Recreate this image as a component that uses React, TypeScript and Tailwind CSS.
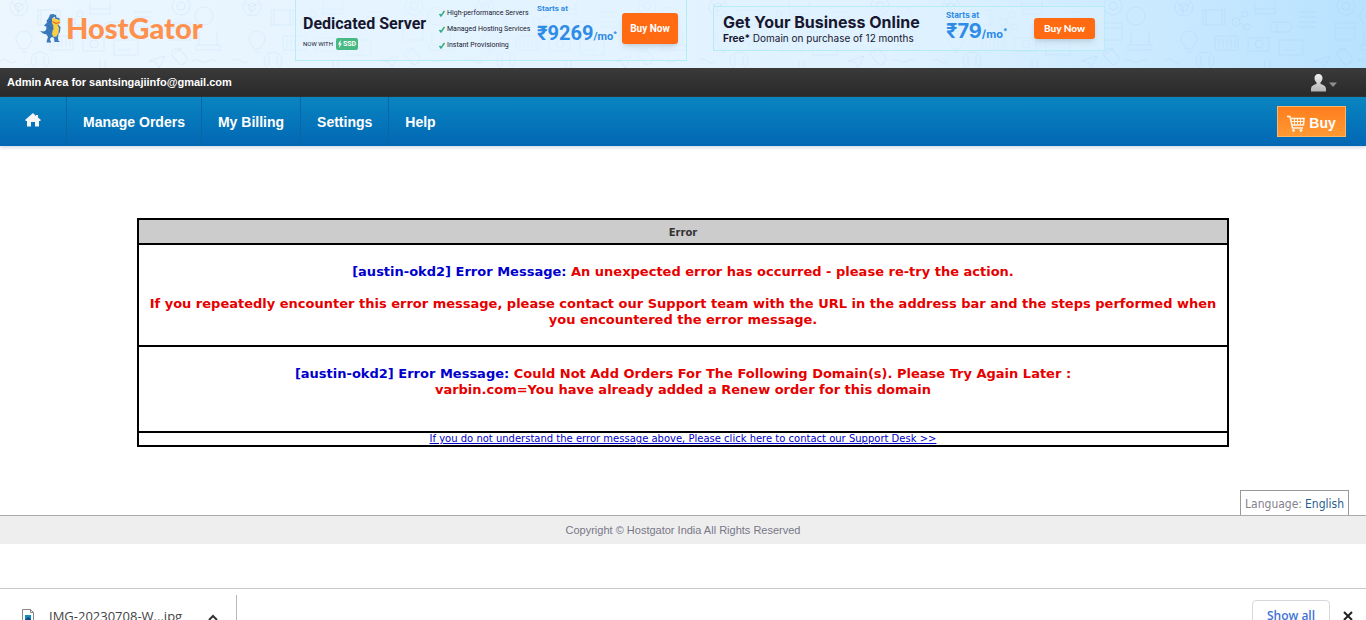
import React from "react";

const tips: string[] = ["High-performance Servers", "Managed Hosting Services", "Instant Provisioning"];

function Doodles() {
  return (
    <svg className="absolute inset-0 h-full w-full" aria-hidden="true">
      <defs>
        <pattern id="doodles" width="233" height="136" patternUnits="userSpaceOnUse">
          <g fill="none" stroke="#6fa6d0" strokeOpacity="0.11" strokeWidth="1">
            <circle cx="19" cy="7" r="9" />
            <circle cx="19" cy="7" r="4" />
            <path d="M12 3l6 4 8-4M18 7v8" />
            <rect x="38" y="10" width="22" height="15" />
            <path d="M41 10v15M57 10v15" />
            <circle cx="71" cy="22" r="4" />
            <circle cx="80" cy="14" r="3" />
            <circle cx="82" cy="27" r="3" />
            <path d="M74 20l4-4M75 23l4 3" />
            <path d="M21 49c-1-4-5-5-5-10a8 8 0 0 1 16 0c0 5-4 6-5 10zM22 52h5" />
            <rect x="50" y="36" width="23" height="14" rx="1" />
            <path d="M54 39v8M58 39v8M62 39v8M66 39v8M70 39v8" />
            <circle cx="40" cy="61" r="9" />
            <path d="M36 56v10M44 56v10M0 61q4-4 8 0t8 0" />
            <path d="M90 2v12h20V2M90 9h20" />
            <rect x="105" y="22" width="22" height="10" rx="5" />
            <path d="M112 22v10M134 12h17M134 17h17M134 22h17M134 27h17" />
            <rect x="83" y="38" width="21" height="13" />
            <circle cx="94" cy="44" r="4" />
            <rect x="114" y="40" width="24" height="15" />
            <path d="M118 50h12M100 60v8M105 60v8M149 61l16-5-6 12-3-6z" />
            <circle cx="181" cy="6" r="9" />
            <circle cx="181" cy="6" r="4" />
            <circle cx="204" cy="16" r="9" />
            <rect x="170" y="23" width="20" height="17" />
            <path d="M170 28h20" />
            <path d="M199 32v13M217 32v13M196 45h24v5h-24z" />
            <rect x="174" y="48" width="10" height="17" rx="4" transform="rotate(-42 179 56)" />
            <path d="M174 53l8-5M192 61q4-3 8 0t8 0t8 0" />
          </g>
        </pattern>
      </defs>
      <rect width="100%" height="100%" fill="url(#doodles)" />
    </svg>
  );
}

function Gator() {
  return (
    <svg className="h-[30px] w-[22px] shrink-0" viewBox="0 0 22 30" aria-hidden="true">
      <path
        fill="#3b79bd"
        d="M9 4.500 10 1.500 13 1l3 1 .5 2.500L19 5l1 1.500-2 1L18.500 12l2 2-.5 5-1.500 2-.5 4 .5 3h1v1h-5l-.5-4-2-1-1.500 1-.5 2 1 1.500V29.500H6.500L7 27l1-3-1.500-2.500L3 20.500 0 18l4 .5 2-1.500.5-3L4 12.500l3-3-.5-2L8 6z"
      />
      <path fill="#f8cf45" d="m12 5 5 1 3 1.500v3L17.500 12 19 15l-.5 5-2 3.500-3 .5-1.500-3 1-5 .5-3-1.500-3z" />
      <path fill="none" stroke="#ee6a2c" strokeWidth="1.200" d="m12.500 8.500 3.500 2 4-1.500" />
      <path fill="none" stroke="#2f68aa" strokeWidth="0.700" d="m8 12 2 3 4 1M8.500 5l3 2.500L9 10M6 18l3 2" />
      <path fill="#fff" d="M13.500 4h1.500v1.500h-1.500z" />
    </svg>
  );
}

export default function App() {
  return (
    <div className="flex h-screen flex-col overflow-hidden bg-white font-['Liberation_Sans',sans-serif]">
      <header className="relative h-[68px] shrink-0 bg-linear-to-r from-[#ebf6ff] via-[#e0f2ff] via-65% to-[#b8e2ff]">
        <Doodles />
        <div className="relative flex h-full items-start">
          <a href="#" aria-label="HostGator" className="flex w-[255px] shrink-0 items-center pt-[13px] pl-10 text-[#ff914f]">
            <Gator />
            <span className="pl-1 font-['Lato',sans-serif] text-[29px] leading-[30px] font-black">HostGator</span>
          </a>
          <section className="ml-10 flex h-[61px] w-[392px] shrink-0 border border-t-0 border-[#b5edf5] bg-[#e3f4ff]/50 font-['Roboto',sans-serif] text-[#17172f]">
            <div className="w-[143px] pt-[12px] pl-[7px]">
              <h2 className="text-[16px] leading-6 font-bold whitespace-nowrap">Dedicated Server</h2>
              <p className="flex items-center gap-[3px] text-[6px] leading-4 whitespace-nowrap">
                NOW WITH
                <span className="flex h-3 items-center gap-px rounded-xs bg-[#48b982] px-[2px] text-[7px] font-bold text-white">
                  <svg className="h-2 w-1" viewBox="0 0 4 8" fill="#fff" aria-hidden="true"><path d="M2.500 0 0 4.500h1.500L1 8l3-4.500H2.500z" /></svg>
                  SSD
                </span>
              </p>
            </div>
            <ul className="w-[98px] pt-[5px] text-[7px] leading-4 whitespace-nowrap">
              {tips.map((tip) => (
                <li key={tip} className="flex items-center gap-[2px]">
                  <svg className="h-[7px] w-[6px] shrink-0" viewBox="0 0 6 7" fill="none" stroke="#29ad86" strokeWidth="1.500" aria-hidden="true">
                    <path d="m0.500 4 1.500 2 3.500-5" />
                  </svg>
                  {tip}
                </li>
              ))}
            </ul>
            <div className="w-[85px] pt-[3px] font-bold text-[#2e8be6]">
              <p className="text-[8px] leading-3">Starts at</p>
              <p className="flex items-baseline text-[20px] leading-9 whitespace-nowrap">
                ₹9269<span className="text-[11px]">/mo</span><sup className="text-[8px]">*</sup>
              </p>
            </div>
            <button className="mt-[13px] h-[31px] w-14 rounded-[3px] bg-[#ff6a13] text-[10px] font-bold whitespace-nowrap text-white shadow-md">Buy Now</button>
          </section>
          <section className="mt-[6px] ml-[26px] flex h-[45px] w-[392px] shrink-0 border border-[#b5edf5] bg-[#e0f2ff]/50 font-['Inter',sans-serif] text-[#17172f]">
            <div className="w-[232px] pt-[6px] pl-[9px] whitespace-nowrap">
              <h2 className="text-[16px] leading-[18px] font-bold">Get Your Business Online</h2>
              <p className="text-[10px] leading-[14px]"><b>Free*</b> Domain on purchase of 12 months</p>
            </div>
            <div className="w-[88px] pt-[3px] font-bold text-[#2e8be6]">
              <p className="text-[8px] leading-[10px]">Starts at</p>
              <p className="text-[20px] leading-[22px] whitespace-nowrap">
                ₹79<span className="text-[11px]">/mo</span><sup className="text-[8px]">*</sup>
              </p>
            </div>
            <button className="mt-[11px] h-[21px] w-[61px] rounded-[3px] bg-[#ff6a13] font-['Lato',sans-serif] text-[10px] font-black text-white shadow-md">Buy Now</button>
          </section>
        </div>
      </header>

      <div className="flex h-[29px] shrink-0 items-center justify-between bg-linear-to-b from-[#3a3a3a] to-[#292929] pr-[29px] pl-[7px]">
        <p className="text-[11px] font-bold text-white">Admin Area for santsingajiinfo@gmail.com</p>
        <button aria-label="Account menu">
          <svg className="h-[18px] w-[26px]" viewBox="0 0 26 18">
            <defs>
              <linearGradient id="person" x1="0" y1="0" x2="0" y2="1">
                <stop offset="0" stopColor="#f2f2f2" />
                <stop offset="1" stopColor="#b4b4b4" />
              </linearGradient>
            </defs>
            <path fill="url(#person)" d="M7.500 0c2.500 0 4 1.700 4 4 0 2-.8 3.400-2 4.400V10c3 .7 5.500 2.200 5.500 5v2.500H0V15c0-2.800 2.500-4.300 5.500-5V8.400C4.300 7.400 3.500 6 3.500 4c0-2.300 1.500-4 4-4z" />
            <path fill="#8f8f8f" d="M18 8.500h8L22 13z" />
          </svg>
        </button>
      </div>

      <nav className="z-10 flex h-[49px] shrink-0 items-stretch bg-linear-to-b from-[#0a85c0] to-[#0467b4] pr-5 text-[14px] font-bold text-white shadow-[0_2px_3px_#d8dde8]">
        <a href="#" aria-label="Home" className="flex w-[67px] justify-center border-r border-[#0767a5] pt-4">
          <svg className="h-[14px] w-4" viewBox="0 0 16 14" fill="#f4f4f4" aria-hidden="true">
            <path d="M8 0 0 7l1 1h1v5.500h4V9h4v4.500h4V8h1l1-1-3-2.600V2h-2v1z" />
          </svg>
        </a>
        <a href="#" className="flex items-center border-r border-[#0767a5] px-4 pt-[2px]">Manage Orders</a>
        <a href="#" className="flex items-center border-r border-[#0767a5] px-4 pt-[2px]">My Billing</a>
        <a href="#" className="flex items-center border-r border-[#0767a5] px-4 pt-[2px]">Settings</a>
        <a href="#" className="flex items-center px-4 pt-[2px]">Help</a>
        <button className="mt-[9px] ml-auto flex h-[31px] w-[69px] items-center justify-center gap-1 border border-[#ffb568] bg-linear-to-b from-[#ff7d1b] to-[#ff9934] pt-1">
          <svg className="h-[17px] w-[18px]" viewBox="0 0 18 17" fill="none" stroke="#fff5e5" aria-hidden="true">
            <path strokeWidth="1.500" d="M0 1.500h3L5.500 13H16M4 3.500h13l-.5 6.500H5" />
            <path strokeWidth="1" d="M4 6.500h13M7.500 4v6M10.500 4v6M13.500 4v6" />
            <circle cx="6.500" cy="15.500" r="1" fill="#fff5e5" />
            <circle cx="14" cy="15.500" r="1" fill="#fff5e5" />
          </svg>
          Buy
        </button>
      </nav>

      <main className="shrink-0 pt-[72px] font-['DejaVu_Sans',sans-serif]">
        <table className="mx-auto w-4/5 border-collapse text-center text-[13px] leading-4 font-bold text-[#e60000]">
          <thead>
            <tr>
              <th className="h-[25px] border-2 border-black bg-[#ccc] p-0 pt-[2px] text-[10px] text-[#333]">Error</th>
            </tr>
          </thead>
          <tbody>
            <tr>
              <td className="h-[102px] border-2 border-black px-[10px] pt-[19px] pb-[17px]">
                <p><span className="text-[#0000cc]">[austin-okd2] Error Message:</span> An unexpected error has occurred - please re-try the action.</p>
                <p className="pt-4">If you repeatedly encounter this error message, please contact our Support team with the URL in the address bar and the steps performed when you encountered the error message.</p>
              </td>
            </tr>
            <tr>
              <td className="h-[86px] border-2 border-black px-[10px] pt-[19px] pb-[33px]">
                <p><span className="text-[#0000cc]">[austin-okd2] Error Message:</span> Could Not Add Orders For The Following Domain(s). Please Try Again Later :</p>
                <p>varbin.com=You have already added a Renew order for this domain</p>
              </td>
            </tr>
            <tr>
              <td className="h-[14px] border-2 border-black p-0 text-[10px] leading-3 font-normal">
                <a href="#" className="text-[#0000cc] underline">If you do not understand the error message above, Please click here to contact our Support Desk &gt;&gt;</a>
              </td>
            </tr>
          </tbody>
        </table>
      </main>

      <footer className="flex shrink-0 flex-col pt-[43px]">
        <div className="mr-[17px] flex h-[25px] items-center gap-[3px] self-end border border-b-0 border-[#999] px-1 pt-[2px] font-['DejaVu_Sans_Condensed',sans-serif] text-[12px] text-[#84818c]">
          Language: <a href="#" className="text-[#285f8f]">English</a>
        </div>
        <p className="h-[29px] border-t border-[#aaa] bg-[#eee] text-center text-[11px] leading-[29px] text-[#777788]">Copyright © Hostgator India All Rights Reserved</p>
      </footer>

      <aside className="mt-11 flex h-14 shrink-0 items-start border-t border-[#c8c8c8] pr-[13px] font-['Open_Sans',sans-serif] text-[13px] text-[#444]">
        <div className="mt-[6px] flex h-11 w-[237px] items-center border-r border-[#b8b8b8] pl-[22px]">
          <svg className="h-4 w-3" viewBox="0 0 12 16" aria-hidden="true">
            <path fill="#fff" stroke="#888" d="M.5.5h8l3 3v12H.5z" />
            <path fill="none" stroke="#888" d="M8.500.5v3h3" />
            <path fill="#168bc0" d="M3 6h6v7H3z" />
            <path fill="#124984" d="m3 11 3-3 3 2v3H3z" />
          </svg>
          <span className="pl-[15px] whitespace-nowrap">IMG-20230708-W...jpg</span>
          <button aria-label="Download options" className="mr-[18px] ml-auto">
            <svg className="h-[7px] w-[10px]" viewBox="0 0 10 7" fill="none" stroke="#333" strokeWidth="2" aria-hidden="true"><path d="m1 6 4-4 4 4" /></svg>
          </button>
        </div>
        <button className="mt-[11px] ml-auto h-8 w-[78px] rounded-[4px] border border-[#d5d8dd] text-[12px] font-semibold text-[#3f72d9]">Show all</button>
        <button aria-label="Close downloads" className="mt-[22px] ml-[13px]">
          <svg className="h-[10px] w-[10px]" viewBox="0 0 10 10" stroke="#222" strokeWidth="2" aria-hidden="true"><path d="m1 1 8 8M9 1 1 9" /></svg>
        </button>
      </aside>
    </div>
  );
}
